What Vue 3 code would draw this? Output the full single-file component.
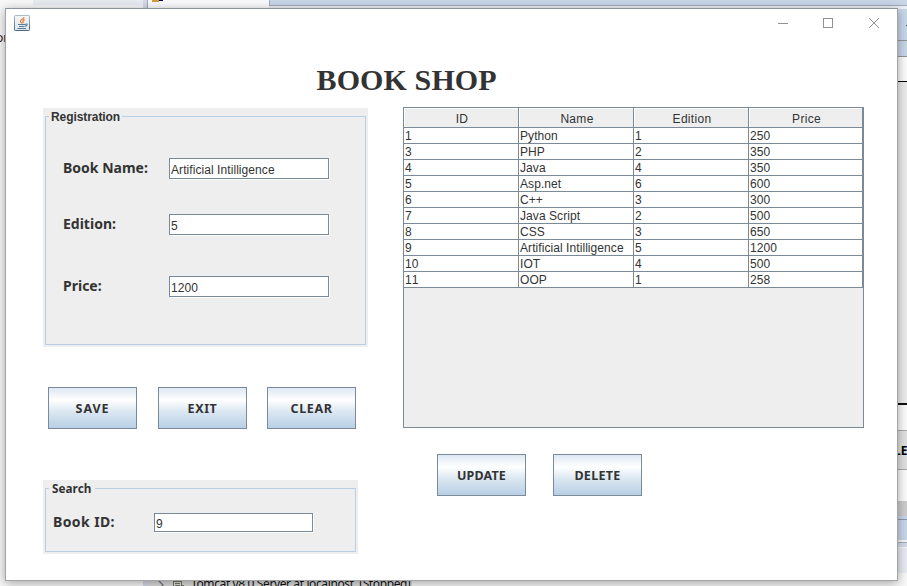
<script setup>
const fields = [
  { id: 'name', label: 'Book Name:', value: 'Artificial Intilligence' },
  { id: 'edition', label: 'Edition:', value: '5' },
  { id: 'price', label: 'Price:', value: '1200' },
]
const columns = ['ID', 'Name', 'Edition', 'Price']
const books = [
  [1, 'Python', 1, 250],
  [3, 'PHP', 2, 350],
  [4, 'Java', 4, 350],
  [5, 'Asp.net', 6, 600],
  [6, 'C++', 3, 300],
  [7, 'Java Script', 2, 500],
  [8, 'CSS', 3, 650],
  [9, 'Artificial Intilligence', 5, 1200],
  [10, 'IOT', 4, 500],
  [11, 'OOP', 1, 258],
]
</script>

<template>
  <div class="desktop">
    <!-- IDE showing behind the dialog -->
    <svg class="backdrop" width="907" height="586" viewBox="0 0 907 586" shape-rendering="crispEdges">
      <rect width="907" height="586" fill="#f8f8f9" />
      <rect x="33" width="110" height="5" fill="#e9ebf3" />
      <rect x="143" width="4" height="586" fill="#d5daea" />
      <rect x="147" width="1" height="9" fill="#a6a8b2" />
      <rect x="148" width="122" height="9" fill="#fbfbfd" />
      <rect x="152" y="0" width="7" height="2" rx="1" fill="#d99b39" />
      <rect x="159" y="0" width="4" height="1" fill="#000060" />
      <rect x="269" width="638" height="6" fill="#a3aabd" />
      <rect x="270" width="637" height="5" fill="#c8d6e8" />
      <rect x="269" y="6" width="638" height="3" fill="#eef0f7" />
      <text x="-4" y="42" class="ide" fill="#201030">or</text>
      <rect x="897" y="9" width="10" height="47" fill="#c8d7e8" />
      <rect x="906" y="25" width="1" height="1" fill="#445" />
      <rect x="897" y="40" width="10" height="1" fill="#929498" />
      <rect x="897" y="56" width="10" height="1" fill="#929498" />
      <rect x="897" y="57" width="10" height="24" fill="#fcfcfc" />
      <rect x="897" y="81" width="10" height="1" fill="#000" />
      <rect x="897" y="82" width="10" height="321" fill="#ececec" />
      <rect x="897" y="403" width="10" height="2" fill="#111" />
      <rect x="897" y="405" width="10" height="25" fill="#fcfcfc" />
      <rect x="897" y="430" width="10" height="40" fill="#aaa" />
      <rect x="897" y="431" width="10" height="38" fill="#e1e1e1" />
      <text x="894" y="455" class="ide bold" fill="#000">LE</text>
      <rect x="897" y="470" width="10" height="31" fill="#fcfcfc" />
      <rect x="897" y="501" width="10" height="15" fill="#cdcdcd" />
      <rect x="897" y="516" width="10" height="3" fill="#c8d6e8" />
      <rect x="897" y="519" width="10" height="1" fill="#8e99a6" />
      <rect x="897" y="520" width="10" height="20" fill="#c8d7e8" />
      <rect x="897" y="542" width="10" height="1" fill="#a9acb5" />
      <rect x="897" y="543" width="10" height="4" fill="#d5daea" />
      <rect x="897" y="548" width="10" height="25" fill="#e9ebf3" />
      <rect x="147" y="580" width="265" height="6" fill="#dcdcdc" />
      <path d="M158 580 L163 585 L161 587" fill="none" stroke="#777" stroke-width="1.3" shape-rendering="auto" />
      <path d="M173.500 586V581.500H181V585H184M175 583.500H180M175 585.500H180" fill="none" stroke="#777965" />
      <text x="191" y="588" class="ide" textLength="220" fill="#111">Tomcat v8.0 Server at localhost&#160; [Stopped]</text>
    </svg>

    <main class="window">
      <header class="titlebar">
        <svg class="java" width="16" height="16" viewBox="0 0 16 16">
          <defs>
            <linearGradient id="tile" x2="0" y2="1">
              <stop offset="0" stop-color="#f4f6f8" /><stop offset="1" stop-color="#dfe5ea" />
            </linearGradient>
            <linearGradient id="edge" x2="0" y2="1">
              <stop offset="0" stop-color="#a9bccb" /><stop offset="1" stop-color="#4a687f" />
            </linearGradient>
          </defs>
          <rect x=".5" y=".5" width="15" height="15" rx=".7" fill="url(#tile)" stroke="url(#edge)" />
          <path d="M10 2.300Q10 3.400 8.200 4.200T6.400 6.300Q6.700 7.400 8 8.400M10.600 4.600Q8.300 5.500 9 6.500T8.500 8.300" fill="none" stroke="#e77a24" stroke-width="1.150" />
          <path d="M4 9.500H11M5 11.500H10.500M11 9.400Q13.500 8.500 13 10Q12.600 11 11 11.300M3.500 13.500H12" fill="none" stroke="#557c9b" stroke-width="1.100" />
        </svg>
        <svg class="controls" width="104" height="12" viewBox="0 0 104 12" fill="none" stroke="#929292">
          <path d="M1 6.500H11M46.500 1.500H55.500V10.500H46.500Z" shape-rendering="crispEdges" />
          <path d="M92 1L102 11M102 1L92 11" />
        </svg>
      </header>

      <h1>BOOK SHOP</h1>

      <div class="content">
        <section class="left">
          <div class="panel registration">
            <fieldset>
              <legend><span class="reg-title">Registration</span></legend>
              <div v-for="f in fields" :key="f.id" class="row" :class="f.id">
                <label>{{ f.label }}</label>
                <div class="input"><span>{{ f.value }}</span></div>
              </div>
            </fieldset>
          </div>
          <div class="actions">
            <button class="save">SAVE</button>
            <button class="exit">EXIT</button>
            <button class="clear">CLEAR</button>
          </div>
          <div class="panel search">
            <fieldset>
              <legend><span class="search-title">Search</span></legend>
              <div class="row book-id">
                <label>Book ID:</label>
                <div class="input"><span>9</span></div>
              </div>
            </fieldset>
          </div>
        </section>

        <section class="right">
          <div class="scroll">
            <div class="grid head">
              <div v-for="c in columns" :key="c">{{ c }}</div>
            </div>
            <div v-for="b in books" :key="b[0]" class="grid record">
              <div v-for="(v, i) in b" :key="i">{{ v }}</div>
            </div>
          </div>
          <div class="actions">
            <button class="update">UPDATE</button>
            <button class="delete">DELETE</button>
          </div>
        </section>
      </div>
    </main>
  </div>
</template>

<style>
body { overflow: hidden; }
</style>

<style scoped>
* { box-sizing: border-box; }
.desktop {
  position: relative;
  width: 907px;
  height: 586px;
  overflow: hidden;
  color: #333;
  font: 12px/16px "Liberation Sans", Arial, sans-serif;
  font-kerning: none;
}
.backdrop { display: block; }
.ide { font: 12px "Noto Sans", sans-serif; }
.bold { font-weight: 700; }
.window {
  position: absolute;
  left: 5px;
  top: 8px;
  width: 893px;
  height: 573px;
  background: #fff;
  border: 1px solid #a3a4a6;
  border-top-color: #8a929c;
  box-shadow: 0 2px 10px rgba(0, 0, 0, .35);
}
.titlebar {
  display: flex;
  justify-content: space-between;
  height: 46px;
  padding: 6px 14px 0 8px;
}
.controls { margin: 2px 2px 0 0; }
h1 {
  margin: 0 0 0 310.500px;
  height: 52px;
  padding-top: 7px;
  font: bold 30px/36px "Liberation Serif", "Times New Roman", serif;
  letter-spacing: .12px;
}
.content { display: flex; padding-left: 37px; }
.left { width: 360px; padding-top: 1px; }
.panel { background: #eee; padding: 0 2px 2px; }
.registration { width: 325px; height: 239px; }
.search { width: 315px; height: 74px; margin-top: 51px; }
fieldset {
  display: flex;
  flex-direction: column;
  height: 100%;
  min-width: 0;
  margin: 0;
  padding: 0;
  border: 1px solid #b8cfe5;
}
legend { height: 17px; margin-left: 3px; padding: 0 2px; font-weight: 700; }
legend span { display: block; line-height: 19px; white-space: nowrap; }
.reg-title { width: 69px; letter-spacing: -.08px; }
.search-title { width: 42px; padding-left: 1px; font-family: "Noto Sans", sans-serif; font-size: 11.700px; line-height: 17px; }
.row { display: flex; padding-left: 17px; height: 22px; }
.row label {
  width: 106px;
  font: bold 14px/20px "Noto Sans", sans-serif;
  white-space: nowrap;
}
.input {
  width: 160px;
  height: 21px;
  padding-left: 1px;
  background: #fff;
  border: 1px solid #7a8a99;
  box-shadow: 1px 1px 0 #fff;
  font-size: 12px;
  line-height: 22px;
  letter-spacing: .07px;
}
.name { margin-top: 33px; }
.edition { margin-top: 34px; }
.price { margin-top: 40px; }
.book-id { margin-top: 16px; padding-left: 7px; }
.book-id label { width: 101px; line-height: 18px; letter-spacing: .4px; }
.book-id .input { width: 159px; height: 19px; line-height: 20px; }
.actions { display: flex; }
.left .actions { padding: 40px 0 0 5px; }
.right .actions { padding: 26px 0 0 34px; }
button {
  width: 89px;
  height: 42px;
  padding: 1px 0 0;
  border: 1px solid #7a8a99;
  background: linear-gradient(#dde8f3 0%, #fff 30%, #dce8f2 58%, #b8cfe5 100%);
  color: #333;
  font: bold 12.500px/40px "Noto Sans", sans-serif;
  letter-spacing: .3px;
}
.save { letter-spacing: .9px; }
.exit { margin-left: 21px; letter-spacing: .6px; }
.clear { margin-left: 20px; letter-spacing: .6px; }
.delete { margin-left: 27px; }
.update { letter-spacing: .15px; }
.scroll {
  width: 461px;
  height: 321px;
  background: #eee;
  border: 1px solid #7a8a99;
}
.grid {
  display: grid;
  grid-template-columns: 115px 115px 115px 114px;
  width: 459px;
}
.grid > div {
  border-right: 1px solid #7a8a99;
  border-bottom: 1px solid #7a8a99;
  white-space: nowrap;
}
.head { height: 20px; }
.head > div {
  padding-left: 2px;
  text-align: center;
  line-height: 22px;
  height: 20px;
  box-shadow: inset 1px 1px 0 #fff;
  letter-spacing: .3px;
}
.record > div {
  height: 16px;
  padding-left: 1px;
  line-height: 16px;
  background: #fff;
  letter-spacing: .07px;
}
</style>
